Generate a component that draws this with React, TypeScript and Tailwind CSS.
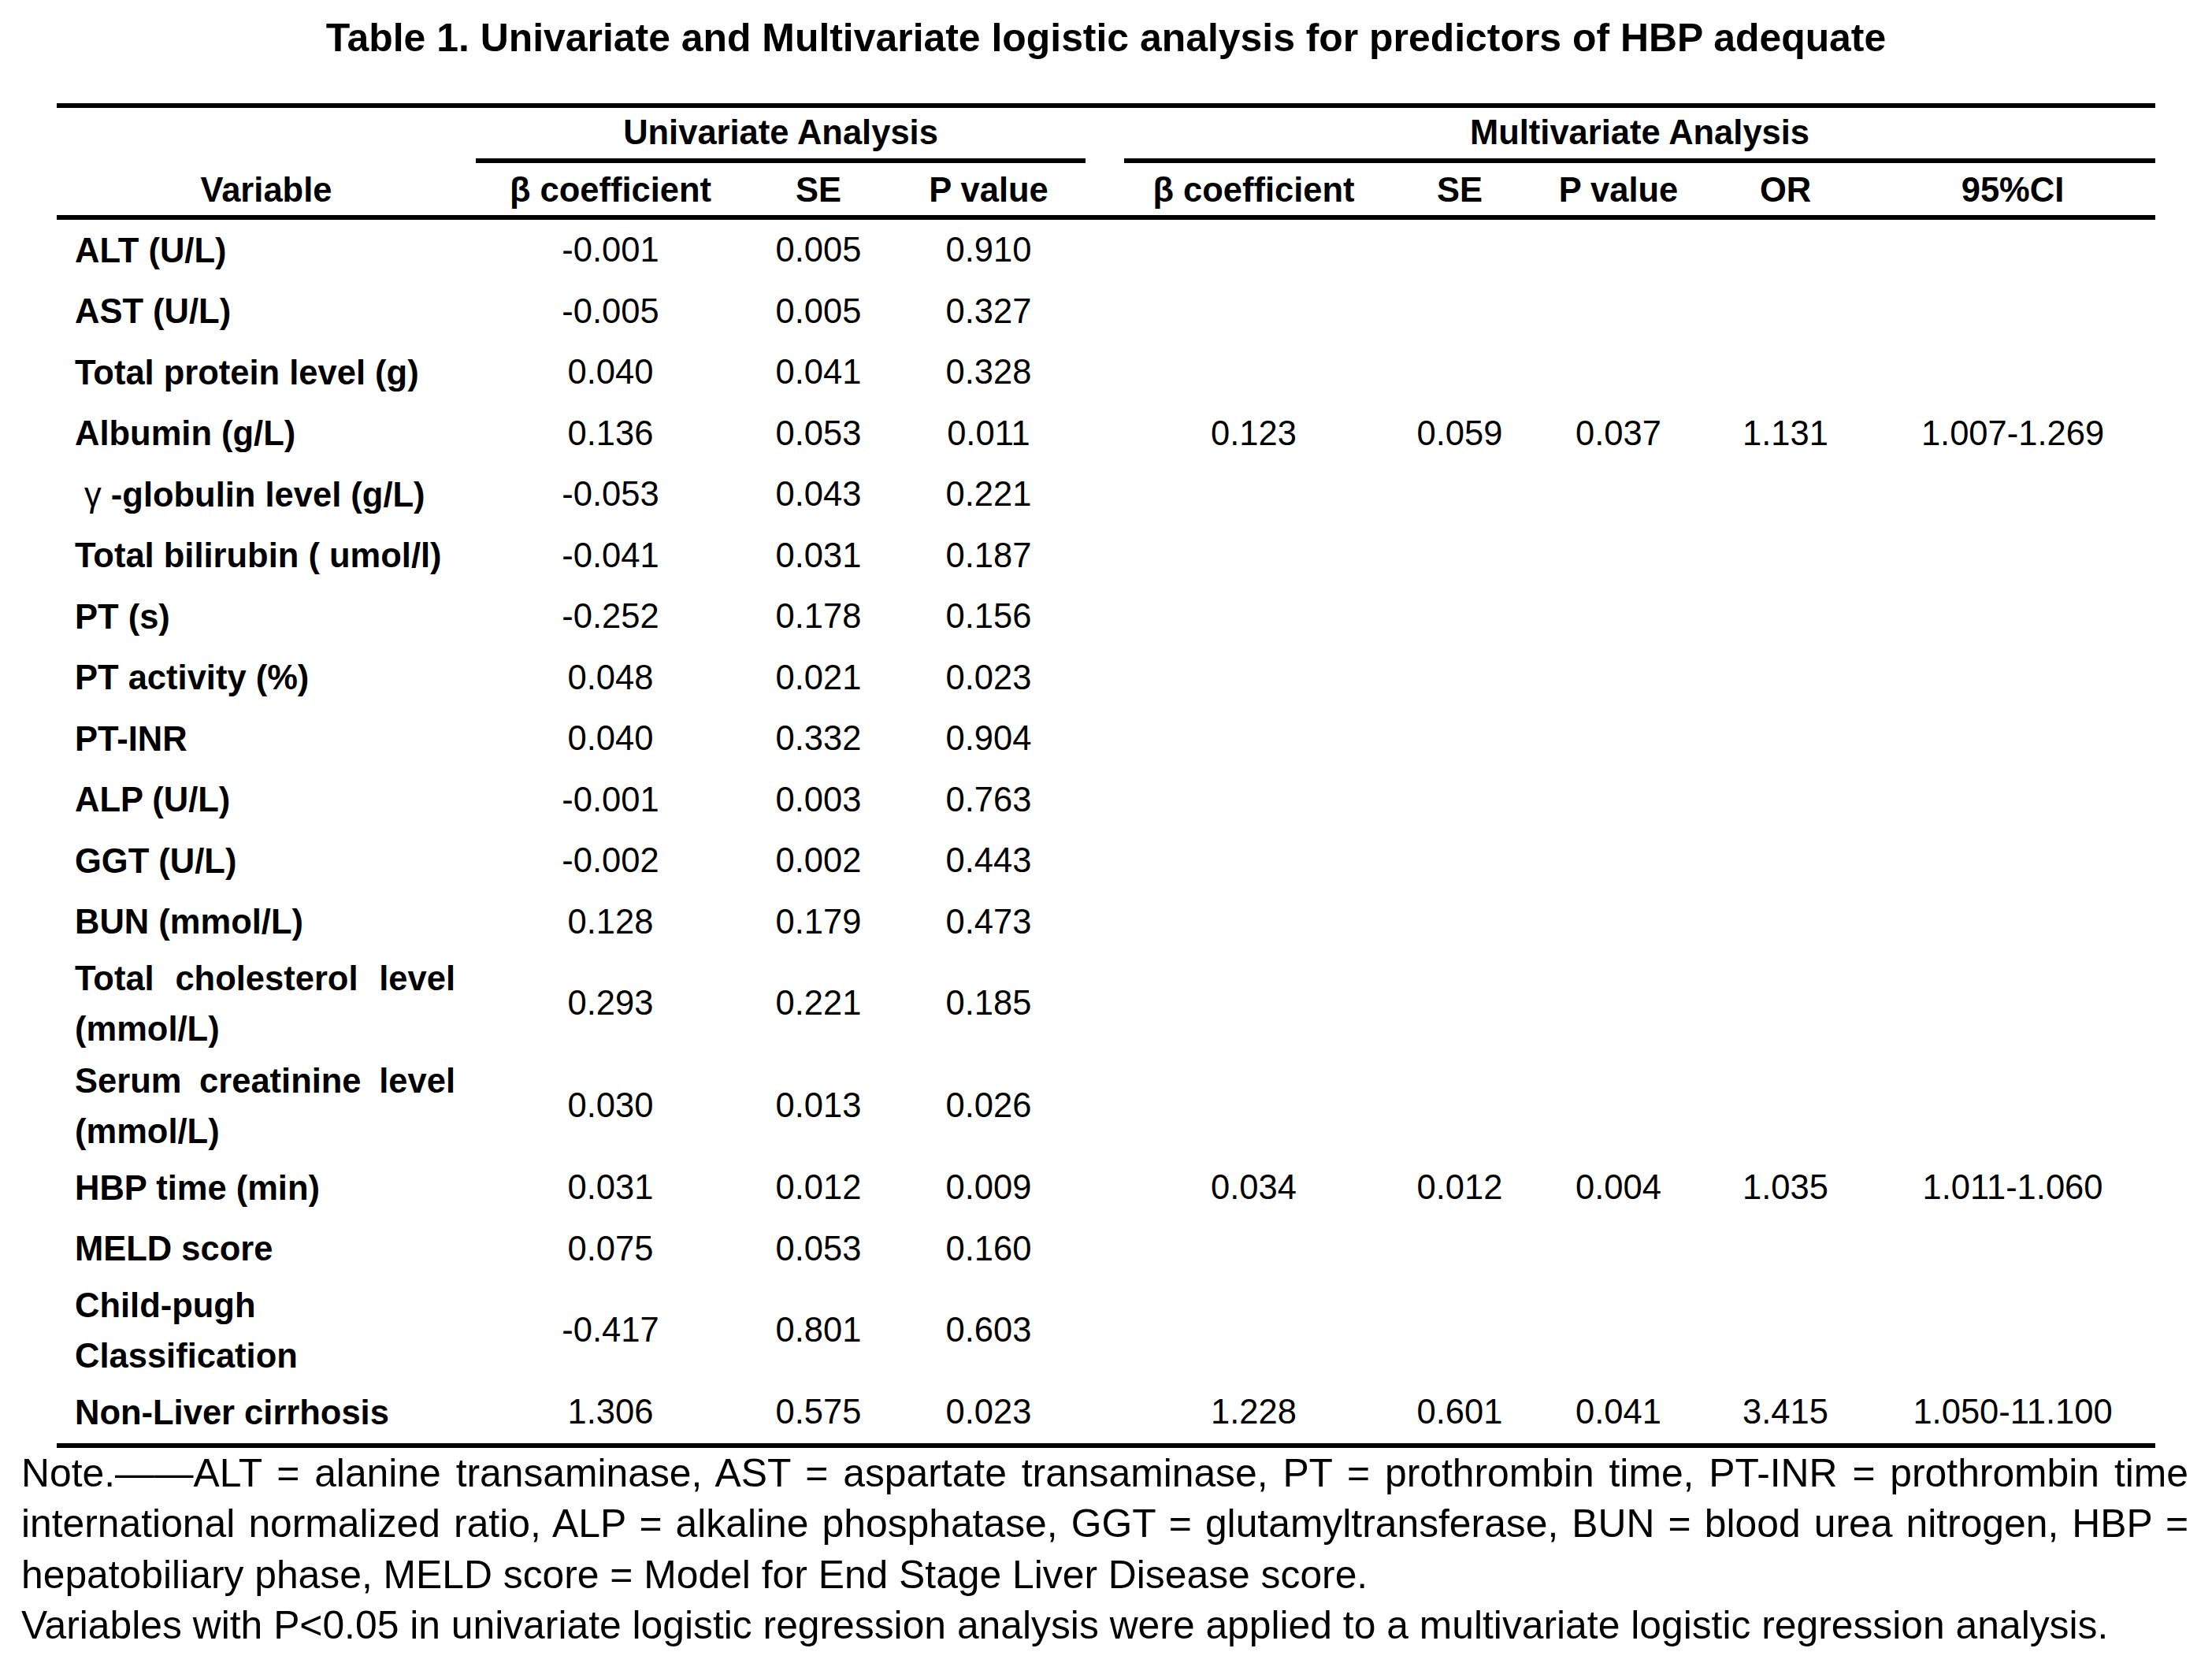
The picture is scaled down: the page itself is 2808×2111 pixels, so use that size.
import type { ReactNode } from "react";

type Row = {
  label: ReactNode;
  uni: [string, string, string];
  multi?: [string, string, string, string, string];
  tall?: boolean;
};

const ROWS: Row[] = [
  { label: "ALT (U/L)", uni: ["-0.001", "0.005", "0.910"] },
  { label: "AST (U/L)", uni: ["-0.005", "0.005", "0.327"] },
  { label: "Total protein level (g)", uni: ["0.040", "0.041", "0.328"] },
  {
    label: "Albumin (g/L)",
    uni: ["0.136", "0.053", "0.011"],
    multi: ["0.123", "0.059", "0.037", "1.131", "1.007-1.269"],
  },
  {
    label: (
      <>
        <span className="ml-[12px] font-normal">γ</span> -globulin level (g/L)
      </>
    ),
    uni: ["-0.053", "0.043", "0.221"],
  },
  { label: "Total bilirubin ( umol/l)", uni: ["-0.041", "0.031", "0.187"] },
  { label: "PT (s)", uni: ["-0.252", "0.178", "0.156"] },
  { label: "PT activity (%)", uni: ["0.048", "0.021", "0.023"] },
  { label: "PT-INR", uni: ["0.040", "0.332", "0.904"] },
  { label: "ALP (U/L)", uni: ["-0.001", "0.003", "0.763"] },
  { label: "GGT (U/L)", uni: ["-0.002", "0.002", "0.443"] },
  { label: "BUN (mmol/L)", uni: ["0.128", "0.179", "0.473"] },
  { label: "Total cholesterol level (mmol/L)", uni: ["0.293", "0.221", "0.185"], tall: true },
  { label: "Serum creatinine level (mmol/L)", uni: ["0.030", "0.013", "0.026"], tall: true },
  {
    label: "HBP time (min)",
    uni: ["0.031", "0.012", "0.009"],
    multi: ["0.034", "0.012", "0.004", "1.035", "1.011-1.060"],
  },
  { label: "MELD score", uni: ["0.075", "0.053", "0.160"] },
  { label: "Child-pugh Classification", uni: ["-0.417", "0.801", "0.603"], tall: true },
  {
    label: "Non-Liver cirrhosis",
    uni: ["1.306", "0.575", "0.023"],
    multi: ["1.228", "0.601", "0.041", "3.415", "1.050-11.100"],
  },
];

const SUB_HEADS = ["Variable", "β coefficient", "SE", "P value", "", "β coefficient", "SE", "P value", "OR", "95%CI"];

const App = () => {
  return (
    <div className="w-[2808px] h-[2111px] bg-white text-black font-['Liberation_Sans',Arial,sans-serif] overflow-hidden">
      <h1 className="pt-[18px] text-center font-bold text-[49.9px] leading-[60px]">
        Table 1. Univariate and Multivariate logistic analysis for predictors of HBP adequate
      </h1>

      {/* Table */}
      <div className="ml-[72px] mt-[53px] w-[2664px] border-t-[6px] border-b-[6px] border-black text-[43.5px]">
        <div className="grid grid-cols-[532px_342px_186px_246px_49px_329px_194px_209px_215px_362px]">
          {/* Spanning headers */}
          <div className="h-[70px]" />
          <div className="col-span-3 h-[70px] border-b-[6px] border-black flex items-center justify-center font-bold">
            Univariate Analysis
          </div>
          <div className="h-[70px]" />
          <div className="col-span-5 h-[70px] border-b-[6px] border-black flex items-center justify-center font-bold">
            Multivariate Analysis
          </div>

          {/* Column headers */}
          {SUB_HEADS.map((h, i) => (
            <div
              key={i}
              className="h-[72px] pt-[3px] border-b-[6px] border-black flex items-center justify-center font-bold"
            >
              {h}
            </div>
          ))}

          {/* Body */}
          {ROWS.map((r, ri) => {
            const h = r.tall ? "h-[130px]" : "h-[77.5px]";
            const multi = r.multi ?? ["", "", "", "", ""];
            return [
              <div key={`${ri}-l`} className={`${h} pl-[23px] pr-[26px] flex items-center font-bold`}>
                <div className="w-full text-justify leading-[64.5px]">{r.label}</div>
              </div>,
              ...r.uni.map((v, ci) => (
                <div key={`${ri}-u${ci}`} className={`${h} flex items-center justify-center`}>
                  {v}
                </div>
              )),
              <div key={`${ri}-g`} className={h} />,
              ...multi.map((v, ci) => (
                <div key={`${ri}-m${ci}`} className={`${h} flex items-center justify-center`}>
                  {v}
                </div>
              )),
            ];
          })}
        </div>
      </div>

      {/* Note */}
      <div className="pl-[27px] pr-[30px] text-[49.8px] leading-[64.5px]">
        <p className="text-justify">
          Note.——ALT = alanine transaminase, AST = aspartate transaminase, PT = prothrombin time, PT-INR =
          prothrombin time international normalized ratio, ALP = alkaline phosphatase, GGT = glutamyltransferase, BUN =
          blood urea nitrogen, HBP = hepatobiliary phase, MELD score = Model for End Stage Liver Disease score.
        </p>
        <p>
          Variables with P&lt;0.05 in univariate logistic regression analysis were applied to a multivariate logistic
          regression analysis.
        </p>
      </div>
    </div>
  );
};

export default App;
